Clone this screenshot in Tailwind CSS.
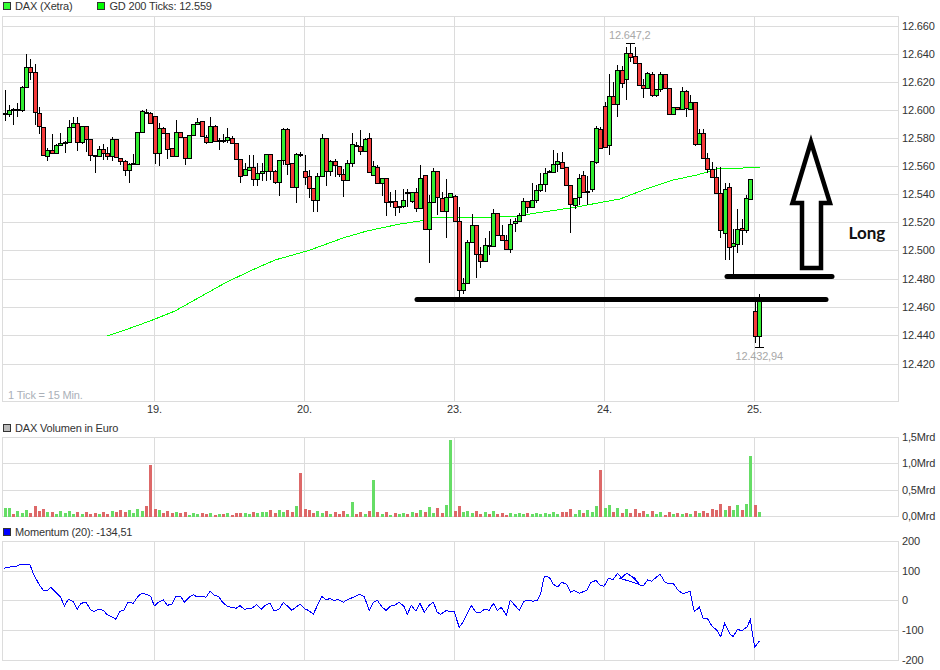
<!DOCTYPE html>
<html lang="de">
<head>
<meta charset="utf-8">
<title>DAX (Xetra)</title>
<script src="https://cdn.jsdelivr.net/npm/@tailwindcss/browser@4"></script>
</head>
<body class="bg-white">
<main class="w-[940px] h-[670px] flex flex-col overflow-hidden bg-white text-[11px] leading-none tracking-[-0.17px] text-[#333] font-['Liberation_Sans',sans-serif]">
  <header class="h-[12px] flex items-center gap-[25px] pl-[3px]">
    <div class="flex items-center gap-1"><span class="w-2 h-2 border border-[#333] bg-[#33ff33]"></span><span>DAX (Xetra)</span></div>
    <div class="flex items-center gap-1"><span class="w-2 h-2 border border-[#333] bg-[#00ff00]"></span><span>GD 200 Ticks: 12.559</span></div>
  </header>
  <svg class="block w-[940px] h-[408px] shrink-0 overflow-visible" viewBox="0 12 940 408" font-size="11" fill="#333" shape-rendering="crispEdges">
    <path id="g1" fill="none" stroke="#dcdcdc"></path>
    <polyline fill="none" stroke="#00ff00" points="107,336 125,330 150,321 175,311 200,297 225,283 250,271 275,260 300,253 310,250 343,238 367,231 400,224 420,221 432,218 460,217 493,217 517,216 543,212 577,207 603,202 620,199 646,189 673,180 697,175 707,172 717,169 743,168 760,167"></polyline>
    <g id="candles"></g>
    <path d="M755 347.5H764M626 43.5H635" stroke="#000" fill="none"></path>
    <g shape-rendering="auto">
      <g text-anchor="start">
        <text x="902" y="30">12.660</text><text x="902" y="58">12.640</text><text x="902" y="86">12.620</text><text x="902" y="114">12.600</text><text x="902" y="142">12.580</text><text x="902" y="170">12.560</text><text x="902" y="198">12.540</text><text x="902" y="226">12.520</text><text x="902" y="254">12.500</text><text x="902" y="283">12.480</text><text x="902" y="311">12.460</text><text x="902" y="339">12.440</text><text x="902" y="368">12.420</text>
      </g>
      <g text-anchor="middle">
        <text x="154.5" y="413">19.</text><text x="304.5" y="413">20.</text><text x="454.5" y="413">23.</text><text x="604.5" y="413">24.</text><text x="754.5" y="413">25.</text>
      </g>
      <text x="8" y="399" fill="#aab0b8">1 Tick = 15 Min.</text>
      <text x="609" y="39" fill="#a8a8a8">12.647,2</text>
      <text x="735.5" y="360" fill="#a8a8a8">12.432,94</text>
      <line x1="417" y1="299.5" x2="826" y2="299.5" stroke="#000" stroke-width="5" stroke-linecap="round"></line>
      <line x1="727" y1="276.5" x2="832" y2="276.5" stroke="#000" stroke-width="5" stroke-linecap="round"></line>
      <path d="M811 142L792.5 203H802V268H821V203H830Z" fill="none" stroke="#000" stroke-width="4.5" stroke-miterlimit="6"></path>
      <text x="848.5" y="238.5" font-size="17" font-weight="700" fill="#111" class="font-['Lato',sans-serif] tracking-normal">Long</text>
    </g>
  </svg>
  <div class="h-[16px] flex items-center pl-[3px] gap-1"><span class="w-2 h-2 border border-[#333] bg-[#bbbbbb]"></span><span>DAX Volumen in Euro</span></div>
  <svg class="block w-[940px] h-[89px] shrink-0 overflow-visible" viewBox="0 436 940 89" font-size="11" fill="#333" shape-rendering="crispEdges">
    <path id="g2" fill="none" stroke="#dcdcdc"></path>
    <g id="vol"></g>
    <g shape-rendering="auto"><text x="902" y="441">1,5Mrd</text><text x="902" y="467">1,0Mrd</text><text x="902" y="494">0,5Mrd</text><text x="902" y="520">0,0Mrd</text></g>
  </svg>
  <div class="h-[14px] flex items-center pl-[3px] gap-1"><span class="w-2 h-2 border border-[#333] bg-[#0000ff]"></span><span>Momentum (20): -134,51</span></div>
  <svg class="block w-[940px] h-[131px] shrink-0 overflow-visible" viewBox="0 539 940 131" font-size="11" fill="#333" shape-rendering="crispEdges">
    <path id="g3" fill="none" stroke="#dcdcdc"></path>
    <polyline id="mom" fill="none" stroke="#0000ff"></polyline>
    <g shape-rendering="auto"><text x="902" y="545">200</text><text x="902" y="575">100</text><text x="902" y="604">0</text><text x="902" y="634">-100</text><text x="902" y="664">-200</text></g>
  </svg>
</main>
<script>
function grid(id,top,bot,rows){
  var d='M2.5 '+(top+.5)+'H898.5V'+(bot+.5)+'H2.5Z';
  rows.forEach(function(y){d+='M2.5 '+(y+.5)+'H898.5'});
  [154,304,454,604,754].forEach(function(x){d+='M'+(x+.5)+' '+top+'V'+bot});
  document.getElementById(id).setAttribute('d',d);
}
grid('g1',16,401,[26,54,82,110,138,166,194,222,250,279,307,335,364]);
grid('g2',437,516,[463,490]);
grid('g3',541,660,[571,600,630]);
var X=function(i){return Math.round(4.5+i*30/7)};
var C=[[1,113,114,90,121],[1,110,114,105,117],[1,109,110,108,125],[1,109,110,103,117],[1,87,110,86,112],[1,67,87,54,88],[0,67,72,59,80],[0,72,112,64,125],[0,113,126,107,134],[0,127,155,127,156],[1,150,156,148,161],[0,150,153,134,154],[1,145,153,144,154],[1,143,145,133,146],[1,142,143,141,153],[1,127,142,120,143],[1,123,127,117,128],[0,123,142,117,151],[1,126,142,126,144],[0,126,139,126,152],[0,139,155,139,161],[1,155,156,155,173],[1,149,156,146,157],[0,149,153,144,160],[0,153,156,147,160],[1,139,156,137,161],[0,139,157,139,158],[0,158,161,158,165],[0,161,170,160,176],[1,164,170,163,183],[1,163,164,154,165],[1,132,164,132,164],[1,111,132,110,132],[1,112,113,109,114],[0,113,123,112,124],[0,116,153,116,164],[1,128,153,123,166],[0,128,133,127,134],[0,133,149,133,159],[0,148,156,148,157],[1,132,156,120,157],[0,132,137,132,138],[0,137,158,137,165],[1,135,158,135,158],[1,124,135,124,136],[1,122,124,118,125],[0,121,136,121,136],[0,137,142,135,144],[1,126,142,117,142],[0,126,141,125,142],[1,140,141,138,150],[1,140,141,134,143],[1,137,140,128,143],[0,138,143,136,144],[0,143,159,143,160],[0,159,176,159,183],[1,169,175,163,176],[1,167,170,155,171],[0,167,179,155,186],[1,173,179,163,186],[1,171,173,163,181],[1,154,171,154,181],[0,154,171,154,180],[0,171,182,170,184],[1,160,182,160,196],[1,129,160,128,165],[0,129,164,128,175],[0,163,187,163,188],[1,154,187,153,203],[1,154,155,152,157],[0,171,177,155,185],[0,176,188,170,198],[0,188,200,188,212],[1,176,200,173,212],[1,138,176,134,176],[0,138,171,138,186],[1,161,171,160,176],[0,161,165,159,177],[0,166,174,166,177],[0,174,180,169,197],[1,163,180,160,180],[1,144,163,133,167],[1,145,146,142,146],[0,146,151,130,155],[1,139,151,138,152],[0,138,172,133,172],[1,166,175,161,175],[0,167,183,165,183],[1,178,183,178,196],[0,178,202,178,216],[1,201,202,192,207],[0,201,207,190,216],[1,206,207,206,213],[1,200,206,189,208],[1,192,193,189,207],[1,192,201,192,203],[0,192,208,188,212],[1,178,208,165,208],[0,175,229,175,229],[1,202,229,195,263],[1,171,202,168,202],[0,171,197,171,215],[0,198,211,192,211],[1,197,211,179,238],[1,193,197,193,197],[0,196,221,195,222],[0,221,290,207,297],[1,283,290,278,294],[1,242,283,240,283],[1,225,242,214,242],[0,225,254,225,278],[0,254,261,247,268],[1,245,261,238,261],[1,245,246,231,255],[1,213,246,209,246],[0,213,235,213,236],[0,235,240,225,240],[0,240,249,235,249],[1,224,249,219,253],[1,221,223,218,232],[1,215,221,213,221],[1,201,215,198,215],[0,201,207,201,213],[1,200,207,183,207],[1,190,200,185,203],[1,184,190,173,192],[1,173,184,168,192],[1,171,172,170,173],[1,164,172,150,172],[1,161,164,153,172],[0,162,168,152,169],[0,167,185,167,185],[0,185,204,185,233],[1,198,205,198,209],[1,178,197,174,205],[0,175,192,171,193],[1,191,192,176,205],[1,161,189,161,192],[1,128,162,126,164],[0,129,148,127,148],[0,106,147,102,147],[1,96,145,74,155],[0,96,104,82,104],[1,70,104,65,117],[0,70,83,66,88],[1,53,79,47,100],[0,53,57,43,62],[0,56,63,47,63],[0,63,85,63,85],[0,85,88,79,98],[1,73,88,72,88],[0,74,95,72,97],[1,89,95,89,97],[1,74,89,72,92],[0,74,88,74,88],[0,88,114,88,114],[1,107,114,107,114],[0,107,109,107,109],[1,91,109,87,109],[0,91,108,90,117],[1,102,109,95,109],[0,102,144,102,146],[1,133,144,129,144],[0,133,158,129,158],[0,158,169,153,173],[0,169,177,162,177],[0,177,193,167,193],[0,193,230,167,238],[1,189,233,183,260],[0,187,247,183,260],[1,243,246,229,275],[1,229,244,209,253],[0,228,230,219,245],[1,198,230,195,233],[1,179,199,179,199],[0,311,336,300,343],[1,297,336,294,347]];
var s='';
C.forEach(function(c,i){
  var x=X(i);
  s+='<path d="M'+(x+.5)+' '+c[3]+'V'+c[4]+'" stroke="#000"></path>';
  s+='<rect x="'+(x-1.5)+'" y="'+(c[1]+.5)+'" width="4" height="'+(c[2]-c[1])+'" fill="'+(c[0]?'#33ee33':'#f53b3b')+'" stroke="#000"></rect>';
});
document.getElementById('candles').innerHTML=s;
/* volume: [green?, top in crop pixels] per tick */
var V1=[[1,355],[1,353],[0,372],[1,362],[1,368],[1,360],[0,368],[0,348],[0,362],[0,357],[1,367],[0,365],[1,372],[1,362],[1,370],[1,362],[1,371],[0,365],[1,371],[0,365],[0,371],[0,369],[1,372],[0,365],[0,371],[1,363],[0,365],[0,359],[0,365],[1,359],[1,368],[1,356],[1,362],[0,347],[0,225],[0,356],[1,359],[0,368],[0,362],[0,368],[1,365],[0,368],[0,365],[1,375],[1,368],[1,371],[0,368],[0,371],[1,368],[0,375],[1,371],[0,371],[1,368],[0,375],[0,368],[0,368],[1,368],[1,371],[0,365],[1,368],[1,365],[1,365],[0,359],[0,368],[1,359],[1,365],[0,359],[0,365],[1,347],[0,248],[0,356],[0,359]];
var V2=[[0,279],[1,273],[1,279],[0,273],[1,282],[0,276],[0,282],[0,273],[1,282],[1,246],[0,282],[0,276],[1,282],[0,273],[1,180],[0,276],[1,282],[0,276],[1,285],[0,279],[1,282],[1,279],[0,282],[1,276],[0,279],[1,270],[0,276],[1,261],[1,279],[0,264],[0,279],[1,255],[1,60],[0,273],[0,258],[1,276],[1,273],[1,279],[0,273],[0,282],[1,276],[0,282],[1,273],[0,282],[0,279],[0,285],[1,279],[1,282],[1,279],[1,282],[0,279],[1,282],[1,279],[1,282],[1,279],[1,282],[1,276],[1,282],[0,276],[0,276],[0,267],[1,282],[1,270],[0,279],[1,270],[1,276],[1,258],[0,150],[1,264],[1,255],[0,276],[1,264],[0,279],[1,267]];
var V3=[[0,279],[0,267],[0,279],[0,273],[1,282],[0,273],[1,282],[1,276],[0,285],[0,276],[1,282],[0,279],[1,282],[0,279],[1,282],[0,273],[1,279],[0,273],[0,279],[0,267],[0,270],[0,252],[1,270],[0,258],[1,270],[1,255],[0,270],[1,252],[1,108],[0,255],[1,276]];
var b='',add=function(i,t,base){var h=Math.round((base-t)/3);b+='<rect x="'+(X(i)-1)+'" y="'+(517-h)+'" width="3" height="'+h+'" fill="'+(t0?'#66dd66':'#dd6868')+'"></rect>'},t0;
V1.forEach(function(v,i){t0=v[0];add(i,v[1],381)});
V2.forEach(function(v,i){t0=v[0];add(i+72,v[1],291)});
V3.forEach(function(v,i){t0=v[0];add(i+146,v[1],290)});
document.getElementById('vol').innerHTML=b;
/* momentum: crop coordinates of the three crops */
var M1=[12,130,20,128,33,125,50,124,60,119,70,118,90,120,100,145,110,165,120,183,130,196,143,196,152,187,162,196,172,207,182,217,193,243,205,223,220,230,232,252,243,235,258,232,272,255,282,259,295,253,310,256,320,268,335,275,348,283,360,259,372,256,383,232,400,235,413,215,425,205,440,208,452,214,463,243,475,232,490,224,502,241,515,238,528,214,542,214,553,232,567,217,580,209,592,216,604,214,618,217,630,199,643,211,655,214,668,232,682,244,695,247,708,250,720,242,733,253,745,251,757,249,770,239,783,253,797,240,810,235,823,258,837,253,850,232,862,243,875,256,900,238,915,252,925,256,940,268,958,229];
var M2=[5,214,20,225,30,220,40,226,55,224,70,232,80,225,100,217,118,208,132,214,148,256,160,232,172,226,187,247,198,256,212,243,225,240,238,232,252,244,262,268,274,241,288,259,300,235,313,262,328,240,340,232,352,262,362,268,380,256,392,261,402,259,418,307,430,290,442,265,454,241,468,262,482,262,493,253,508,256,520,235,532,256,544,247,559,271,571,226,598,256,612,229,625,226,640,229,652,226,662,205,673,154,688,157,700,178,713,186,725,172,740,178,752,202,762,196,778,205,800,196,812,173,828,166,840,181,852,184,865,161,880,163,893,145,905,160,920,145,945,160,958,178];
var M3=[0,475,20,460,40,473,60,495,72,495,83,480,95,484,120,462,135,487,150,492,160,490,175,512,190,521,210,514,223,575,238,562,250,596,263,597,277,620,290,630,302,650,314,610,330,643,340,650,352,628,365,632,380,622,391,600,404,682,418,663];
var p=[],put=function(a,ox,oy){for(var i=0;i<a.length;i+=2)p.push((ox+a[i]/3).toFixed(1)+','+(oy+a[i+1]/3).toFixed(1))};
put(M1,0,525);put(M2,320,525);put(M3,620,420);
document.getElementById('mom').setAttribute('points',p.join(' '));
</script>
</body>
</html>
